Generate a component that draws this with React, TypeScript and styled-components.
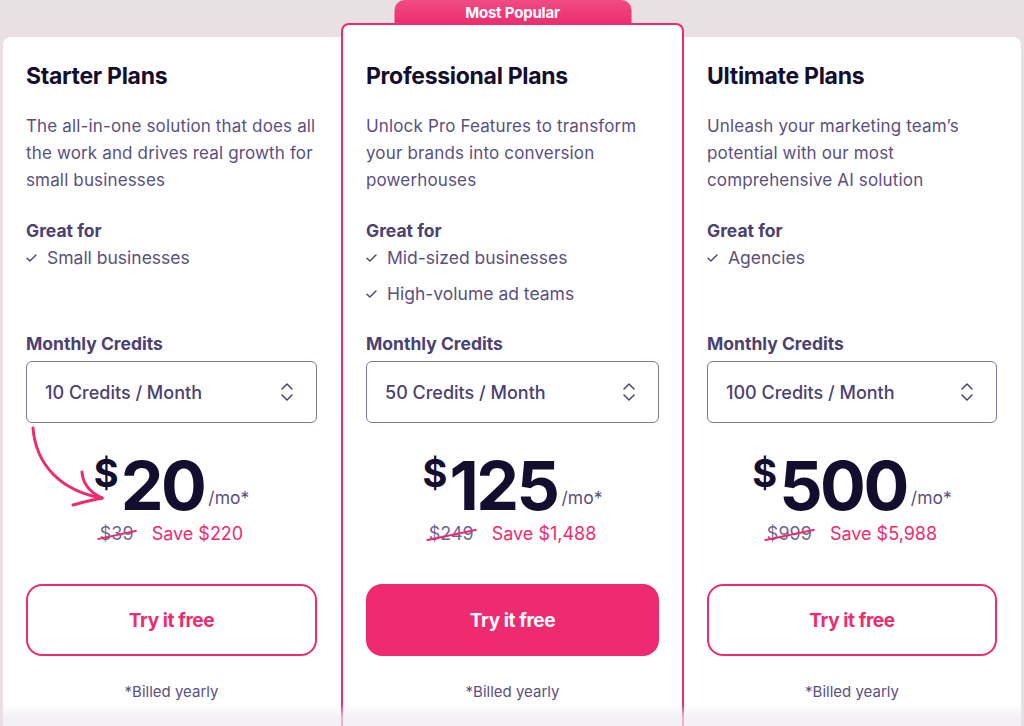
import { FC } from "react";
import styled, { createGlobalStyle } from "styled-components";
import { ChevronsUpDown } from "lucide-react";

const colors = {
  page: "#e9e0e4",
  pink: "#ee2b6f",
  ink: "#130d2e",
  text: "#5a5080",
  label: "#4b4172",
  border: "#7d779a",
};

type Plan = {
  name: string;
  desc: string;
  greatFor: string[];
  credits: string;
  price: string;
  oldPrice: string;
  save: string;
  featured?: boolean;
};

const plans: Plan[] = [
  {
    name: "Starter Plans",
    desc: "The all-in-one solution that does all the work and drives real growth for small businesses",
    greatFor: ["Small businesses"],
    credits: "10 Credits / Month",
    price: "20",
    oldPrice: "$39",
    save: "Save $220",
  },
  {
    name: "Professional Plans",
    desc: "Unlock Pro Features to transform your brands into conversion powerhouses",
    greatFor: ["Mid-sized businesses", "High-volume ad teams"],
    credits: "50 Credits / Month",
    price: "125",
    oldPrice: "$249",
    save: "Save $1,488",
    featured: true,
  },
  {
    name: "Ultimate Plans",
    desc: "Unleash your marketing team’s potential with our most comprehensive AI solution",
    greatFor: ["Agencies"],
    credits: "100 Credits / Month",
    price: "500",
    oldPrice: "$999",
    save: "Save $5,988",
  },
];

const GlobalStyle = createGlobalStyle`
  html, body {
    margin: 0;
    padding: 0;
    overflow: hidden;
    background: ${colors.page};
  }
  body {
    font-family: Inter, "Noto Sans", "Liberation Sans", sans-serif;
    -webkit-font-smoothing: antialiased;
  }
  * { box-sizing: border-box; }
`;

const CheckIcon = () => (
  <svg width="11" height="8" viewBox="0 0 11 8" fill="none">
    <path
      d="M1 4.2 L3.9 7 L10 1"
      stroke={colors.label}
      strokeWidth="1.4"
      strokeLinecap="round"
      strokeLinejoin="round"
    />
  </svg>
);

const HandArrow = () => (
  <ArrowSvg width="80" height="85" viewBox="0 0 80 85" fill="none">
    <path
      d="M2 3 C 5 40, 30 66, 71 73"
      stroke={colors.pink}
      strokeWidth="3"
      strokeLinecap="round"
    />
    <path
      d="M51 47 Q 52 64 71 73"
      stroke={colors.pink}
      strokeWidth="3"
      strokeLinecap="round"
    />
    <path
      d="M42 80 Q 56 76 71 73"
      stroke={colors.pink}
      strokeWidth="3"
      strokeLinecap="round"
    />
  </ArrowSvg>
);

const PlanCard: FC<{ plan: Plan; index: number }> = ({ plan, index }) => {
  return (
    <Card $featured={plan.featured}>
      {plan.featured && <Badge>Most Popular</Badge>}
      {index === 0 && <HandArrow />}
      <Title>{plan.name}</Title>
      <Desc>{plan.desc}</Desc>
      <Label $top={23}>Great for</Label>
      <FeatureList>
        {plan.greatFor.map((f) => (
          <Feature key={f}>
            <CheckIcon />
            <span>{f}</span>
          </Feature>
        ))}
      </FeatureList>
      <Label>Monthly Credits</Label>
      <Select>
        <span>{plan.credits}</span>
        <ChevronsUpDown size={24} strokeWidth={1.5} color={colors.label} />
      </Select>
      <PriceRow>
        <Currency>$</Currency>
        <Amount>{plan.price}</Amount>
        <Per>/mo*</Per>
      </PriceRow>
      <SaveRow>
        <OldPrice>{plan.oldPrice}</OldPrice>
        <Save>{plan.save}</Save>
      </SaveRow>
      <TryButton $filled={plan.featured}>Try it free</TryButton>
      <Billed>*Billed yearly</Billed>
    </Card>
  );
};

const App = () => {
  return (
    <>
      <GlobalStyle />
      <Page>
        <Panel>
          {plans.map((p, i) => (
            <PlanCard key={p.name} plan={p} index={i} />
          ))}
        </Panel>
      </Page>
      <BottomFade />
    </>
  );
};

const Page = styled.div`
  padding: 37px 3px 0;
  height: 726px;
`;

const Panel = styled.div`
  background: #fff;
  border-radius: 16px 16px 0 0;
  display: grid;
  grid-template-columns: 338px 343px 1fr;
  align-items: start;
  min-height: 700px;
`;

const Card = styled.div<{ $featured?: boolean }>`
  position: relative;
  display: flex;
  flex-direction: column;
  padding: ${({ $featured }) => ($featured ? "37px 23px 0" : "25px 24px 0 23px")};
  margin-top: ${({ $featured }) => ($featured ? "-14px" : "0")};
  min-height: ${({ $featured }) => ($featured ? "720px" : "auto")};
  background: #fff;
  border: ${({ $featured }) => ($featured ? `2px solid ${colors.pink}` : "none")};
  border-bottom: none;
  border-radius: 8px 8px 0 0;
`;

const Badge = styled.div`
  position: absolute;
  top: -25px;
  left: 50%;
  transform: translateX(-50%);
  width: 237px;
  height: 25px;
  border-radius: 10px 10px 0 0;
  background: linear-gradient(180deg, #ef4c83 0%, ${colors.pink} 100%);
  color: #fff;
  font-size: 15px;
  font-weight: 700;
  letter-spacing: -0.2px;
  display: flex;
  align-items: center;
  justify-content: center;
  padding-bottom: 1px;
`;

const ArrowSvg = styled.svg`
  position: absolute;
  left: 28px;
  top: 388px;
`;

const Title = styled.h2`
  margin: 0;
  font-size: 23px;
  line-height: 28px;
  font-weight: 700;
  letter-spacing: -0.3px;
  color: ${colors.ink};
`;

const Desc = styled.p`
  margin: 23px -6px 0 0;
  font-size: 17px;
  line-height: 27px;
  letter-spacing: 0.15px;
  color: ${colors.text};
`;

const Label = styled.div<{ $top?: number }>`
  margin-top: ${({ $top }) => $top ?? 0}px;
  font-size: 17.5px;
  line-height: 27px;
  font-weight: 700;
  color: ${colors.label};
`;

const FeatureList = styled.div`
  height: 86px;
  display: flex;
  flex-direction: column;
  gap: 9px;
`;

const Feature = styled.div`
  display: flex;
  align-items: center;
  gap: 10px;
  font-size: 17.5px;
  line-height: 27px;
  color: ${colors.text};
`;

const Select = styled.div`
  margin-top: 4px;
  height: 62px;
  border: 1.5px solid ${colors.border};
  border-radius: 6px;
  padding: 0 17px 0 18px;
  display: flex;
  align-items: center;
  justify-content: space-between;
  font-size: 18px;
  font-weight: 500;
  color: ${colors.label};
`;

const PriceRow = styled.div`
  margin-top: 28px;
  display: flex;
  justify-content: center;
  align-items: flex-start;
  color: ${colors.ink};
`;

const Currency = styled.span`
  font-size: 38px;
  line-height: 38px;
  font-weight: 700;
  margin-top: 3px;
  margin-right: 2px;
`;

const Amount = styled.span`
  font-size: 68px;
  line-height: 68px;
  font-weight: 700;
  letter-spacing: -2.5px;
`;

const Per = styled.span`
  align-self: flex-end;
  margin: 0 0 11px 4px;
  font-size: 17.5px;
  line-height: 20px;
  color: ${colors.text};
`;

const SaveRow = styled.div`
  margin-top: 1px;
  display: flex;
  justify-content: center;
  gap: 18px;
  font-size: 18px;
  line-height: 27px;
`;

const OldPrice = styled.span`
  position: relative;
  color: #6d6690;
  &::after {
    content: "";
    position: absolute;
    left: -3px;
    right: -3px;
    top: 50%;
    height: 1.6px;
    background: ${colors.pink};
    transform: rotate(-12deg);
  }
`;

const Save = styled.span`
  color: ${colors.pink};
`;

const TryButton = styled.button<{ $filled?: boolean }>`
  margin-top: 37px;
  height: 72px;
  width: 100%;
  border-radius: 16px;
  border: 2px solid ${colors.pink};
  background: ${({ $filled }) => ($filled ? colors.pink : "#fff")};
  color: ${({ $filled }) => ($filled ? "#fff" : colors.pink)};
  font-family: inherit;
  font-size: 19px;
  font-weight: 700;
  letter-spacing: -0.4px;
  cursor: pointer;
`;

const Billed = styled.div`
  margin-top: 25px;
  text-align: center;
  font-size: 15px;
  line-height: 22px;
  color: ${colors.text};
`;

const BottomFade = styled.div`
  position: fixed;
  left: 3px;
  right: 3px;
  bottom: 0;
  height: 22px;
  background: linear-gradient(180deg, rgba(240, 236, 243, 0) 0%, rgba(240, 236, 243, 0.7) 60%);
  pointer-events: none;
`;

export default App;
